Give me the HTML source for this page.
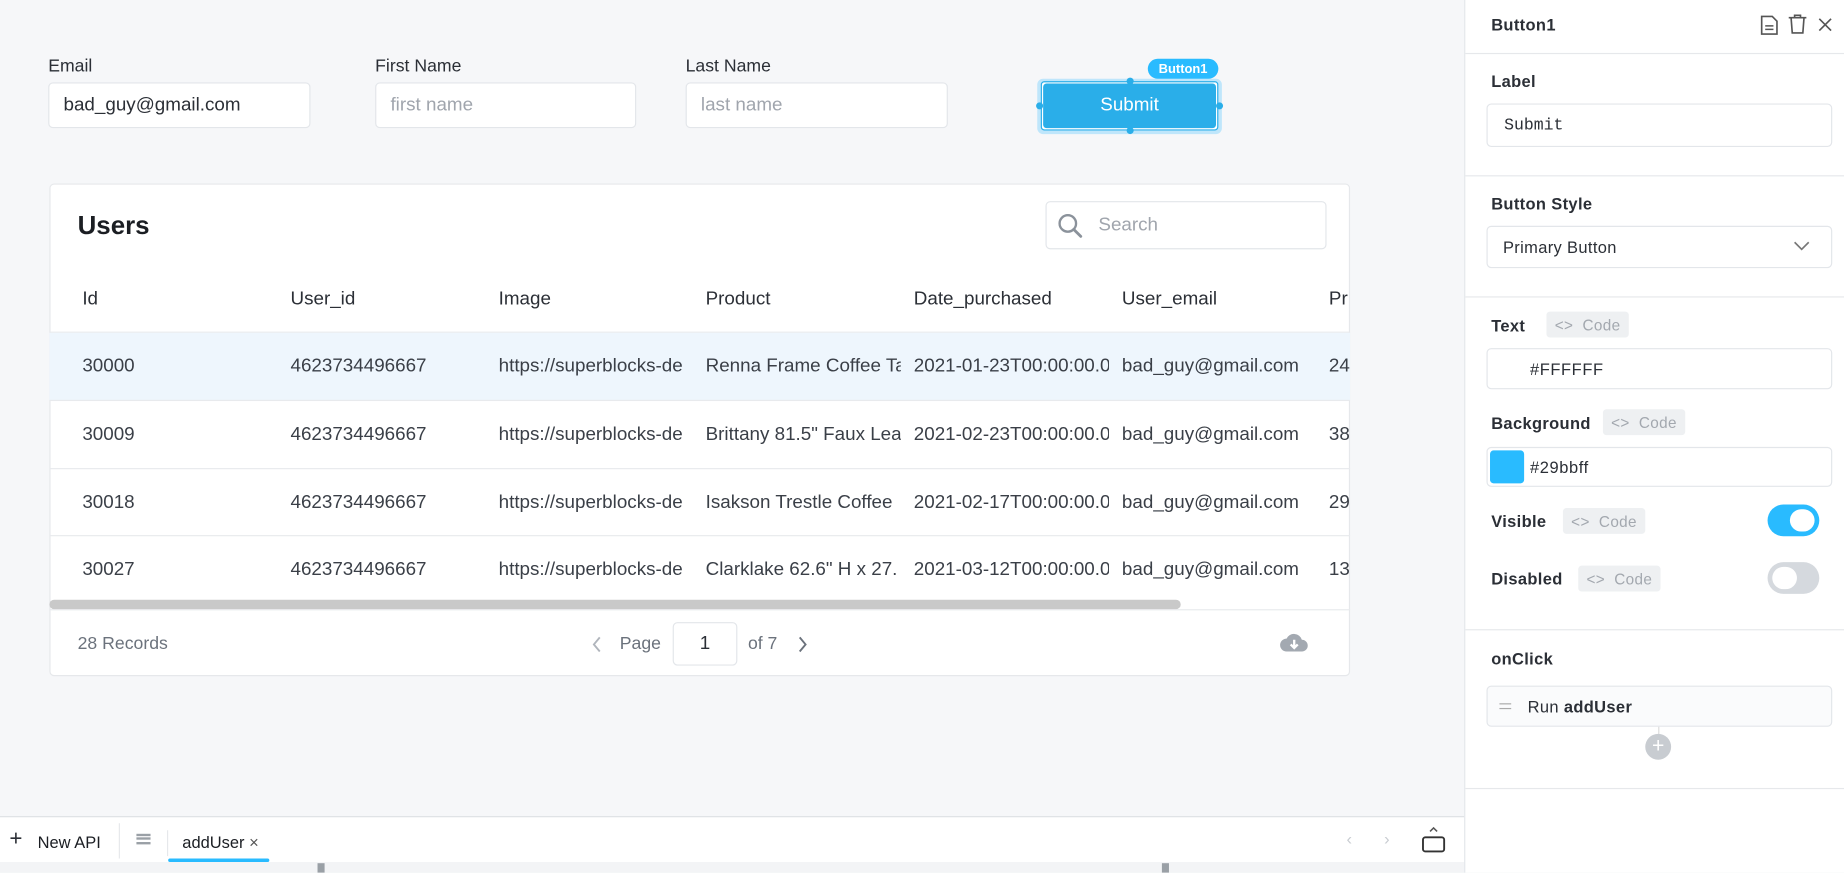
<!DOCTYPE html>
<html><head><meta charset="utf-8"><style>
*{box-sizing:border-box;margin:0;padding:0}
html,body{width:1844px;height:872px;overflow:hidden;background:#f6f7f9;font-family:"Liberation Sans",sans-serif}
#w{position:absolute;left:0;top:0;width:1568px;height:742px;transform:scale(1.17602);transform-origin:0 0;background:#f6f7f9;color:#2b2f36}
.a{position:absolute}
.lbl{font-size:15px;color:#2b2f36}
.inp{background:#fff;border:1px solid #e3e6ea;border-radius:4px;font-size:16px;padding:0 12px;display:flex;align-items:center}
.th{font-size:16px;color:#2b2f36}
.td{font-size:16px;color:#3a3f47;white-space:nowrap;overflow:hidden}
.row{position:absolute;left:42px;width:1106px;border-bottom:1px solid #e8eaed}
.pl{font-size:14px;font-weight:bold;color:#2b2f36;letter-spacing:.3px}
.chip{position:absolute;background:#eef0f2;border-radius:3px;color:#a3a8af;font-size:13px;height:22px;display:flex;align-items:center;padding:0 7px;letter-spacing:.3px}
.pin{position:absolute;left:1264px;width:294px;background:#fff;border:1px solid #e3e6ea;border-radius:4px;display:flex;align-items:center;font-size:14px;color:#2b2f36}
.div{position:absolute;left:1246px;width:322px;height:1px;background:#e6e8eb}
</style></head><body><div id="w">
<div class="a lbl" style="left:41px;top:48px">Email</div>
<div class="a lbl" style="left:319px;top:48px">First Name</div>
<div class="a lbl" style="left:583px;top:48px">Last Name</div>
<div class="a inp" style="left:41px;top:70px;width:223px;height:39px;color:#2b2f36">bad_guy@gmail.com</div>
<div class="a inp" style="left:319px;top:70px;width:222px;height:39px;color:#a0a5ad">first name</div>
<div class="a inp" style="left:583px;top:70px;width:223px;height:39px;color:#a0a5ad">last name</div>
<div class="a" style="left:882px;top:67px;width:157px;height:47px;background:#bfe6fb;border-radius:5px"></div>
<div class="a" style="left:885px;top:69px;width:151px;height:42px;border:1px solid #2aaee9;background:#fff;border-radius:3px"></div>
<div class="a" style="left:887px;top:71px;width:147px;height:38px;background:#2aaee9;border-radius:3px;color:#fff;font-size:16px;display:flex;align-items:center;justify-content:center">Submit</div>
<div class="a" style="left:958px;top:66px;width:6px;height:6px;border-radius:50%;background:#2aaee9"></div>
<div class="a" style="left:958px;top:108px;width:6px;height:6px;border-radius:50%;background:#2aaee9"></div>
<div class="a" style="left:881px;top:87px;width:6px;height:6px;border-radius:50%;background:#2aaee9"></div>
<div class="a" style="left:1034px;top:87px;width:6px;height:6px;border-radius:50%;background:#2aaee9"></div>
<div class="a" style="left:976px;top:50px;width:60px;height:17px;background:#29bbff;border-radius:9px;color:#fff;font-size:11px;font-weight:bold;display:flex;align-items:center;justify-content:center">Button1</div>

<div class="a" style="left:42px;top:156px;width:1106px;height:419px;background:#fff;border:1px solid #e6e8eb;border-radius:4px"></div>
<div class="a" style="left:66px;top:179px;font-size:22px;font-weight:bold;color:#1b1e23">Users</div>
<div class="a inp" style="left:889px;top:171px;width:239px;height:41px;color:#a0a5ad;padding-left:44px">Search</div>
<svg class="a" style="left:899px;top:181px" width="22" height="22" viewBox="0 0 22 22"><circle cx="9" cy="9" r="7" fill="none" stroke="#8b929b" stroke-width="2"/><path d="M14 14l6 6" stroke="#8b929b" stroke-width="2.4" stroke-linecap="round"/></svg>
<div class="row" style="top:226px;height:57px"></div>
<div class="a th" style="left:70px;top:246px">Id</div>
<div class="a th" style="left:247px;top:246px">User_id</div>
<div class="a th" style="left:424px;top:246px">Image</div>
<div class="a th" style="left:600px;top:246px">Product</div>
<div class="a th" style="left:777px;top:246px">Date_purchased</div>
<div class="a th" style="left:954px;top:246px">User_email</div>
<div class="a th" style="left:1130px;top:246px;width:18px;overflow:hidden">Pr</div>
<div class="row" style="top:283px;height:58px;background:#eef6fd"></div>
<div class="row" style="top:341px;height:58px"></div>
<div class="row" style="top:399px;height:57px"></div>
<div class="row" style="top:456px;height:63px"></div>
<div class="a" style="left:0;top:303px">
<div class="a td" style="left:70px;top:0">30000</div><div class="a td" style="left:247px;top:0">4623734496667</div><div class="a td" style="left:424px;top:0;width:166px">https://superblocks-de</div><div class="a td" style="left:600px;top:0;width:166px">Renna Frame Coffee Ta</div><div class="a td" style="left:777px;top:0;width:166px">2021-01-23T00:00:00.0</div><div class="a td" style="left:954px;top:0">bad_guy@gmail.com</div><div class="a td" style="left:1130px;top:0;width:18px">24</div>
</div>
<div class="a" style="left:0;top:361px">
<div class="a td" style="left:70px;top:0">30009</div><div class="a td" style="left:247px;top:0">4623734496667</div><div class="a td" style="left:424px;top:0;width:166px">https://superblocks-de</div><div class="a td" style="left:600px;top:0;width:166px">Brittany 81.5" Faux Lea</div><div class="a td" style="left:777px;top:0;width:166px">2021-02-23T00:00:00.0</div><div class="a td" style="left:954px;top:0">bad_guy@gmail.com</div><div class="a td" style="left:1130px;top:0;width:18px">38</div>
</div>
<div class="a" style="left:0;top:419px">
<div class="a td" style="left:70px;top:0">30018</div><div class="a td" style="left:247px;top:0">4623734496667</div><div class="a td" style="left:424px;top:0;width:166px">https://superblocks-de</div><div class="a td" style="left:600px;top:0;width:166px">Isakson Trestle Coffee</div><div class="a td" style="left:777px;top:0;width:166px">2021-02-17T00:00:00.0</div><div class="a td" style="left:954px;top:0">bad_guy@gmail.com</div><div class="a td" style="left:1130px;top:0;width:18px">29</div>
</div>
<div class="a" style="left:0;top:476px">
<div class="a td" style="left:70px;top:0">30027</div><div class="a td" style="left:247px;top:0">4623734496667</div><div class="a td" style="left:424px;top:0;width:166px">https://superblocks-de</div><div class="a td" style="left:600px;top:0;width:166px">Clarklake 62.6" H x 27.</div><div class="a td" style="left:777px;top:0;width:166px">2021-03-12T00:00:00.0</div><div class="a td" style="left:954px;top:0">bad_guy@gmail.com</div><div class="a td" style="left:1130px;top:0;width:18px">13</div>
</div>
<div class="a" style="left:42px;top:510px;width:962px;height:8px;background:#c9c9c9;border-radius:4px"></div>
<div class="a" style="left:66px;top:539px;font-size:15px;color:#6b727c">28 Records</div>
<svg class="a" style="left:503px;top:541px" width="10" height="14" viewBox="0 0 10 14"><path d="M7 1L2 7l5 6" fill="none" stroke="#b0b5bc" stroke-width="1.6"/></svg>
<div class="a" style="left:527px;top:539px;font-size:15px;color:#6b727c">Page</div>
<div class="a" style="left:572px;top:529px;width:55px;height:37px;border:1px solid #e3e6ea;border-radius:4px;background:#fff;font-size:16px;display:flex;align-items:center;justify-content:center">1</div>
<div class="a" style="left:636px;top:539px;font-size:15px;color:#6b727c">of 7</div>
<svg class="a" style="left:677px;top:541px" width="10" height="14" viewBox="0 0 10 14"><path d="M3 1l5 6-5 6" fill="none" stroke="#6b727c" stroke-width="1.6"/></svg>
<svg class="a" style="left:1088px;top:537px" width="25" height="20" viewBox="0 0 25 20"><path d="M6 17h13a5 5 0 0 0 0-10 7 7 0 0 0-13-1 5.5 5.5 0 0 0 0 11z" fill="#a3a9b1"/><path d="M12.5 7v7M9.5 11l3 3 3-3" stroke="#fff" stroke-width="2" fill="none"/></svg>

<div class="a" style="left:0;top:694px;width:1246px;height:1px;background:#dcdfe3"></div>
<div class="a" style="left:0;top:695px;width:1246px;height:38px;background:#fff"></div>
<div class="a" style="left:0;top:733px;width:1246px;height:9px;background:#f3f4f6"></div>
<div class="a" style="left:270px;top:734px;width:6px;height:8px;background:#9aa0a6"></div>
<div class="a" style="left:988px;top:734px;width:6px;height:8px;background:#9aa0a6"></div>
<div class="a" style="left:8px;top:703px;font-size:19px;color:#2b2f36">+</div>
<div class="a" style="left:32px;top:708px;font-size:14px;color:#1b1e23">New API</div>
<div class="a" style="left:101px;top:700px;width:1px;height:30px;background:#e6e8eb"></div>
<div class="a" style="left:116px;top:709px;width:12px;height:9px;border-top:2px solid #9aa0a6;border-bottom:2px solid #9aa0a6"></div>
<div class="a" style="left:116px;top:712px;width:12px;height:2px;background:#9aa0a6"></div>
<div class="a" style="left:142px;top:706px;width:1px;height:22px;background:#e6e8eb"></div>
<div class="a" style="left:155px;top:708px;font-size:14px;color:#1b1e23">addUser <span style="color:#555">×</span></div>
<div class="a" style="left:143px;top:730px;width:86px;height:3px;background:#29bbff;border-radius:2px"></div>
<div class="a" style="left:1145px;top:705px;font-size:14px;color:#c8ccd1">&#x2039;</div>
<div class="a" style="left:1177px;top:705px;font-size:14px;color:#c8ccd1">&#x203A;</div>
<svg class="a" style="left:1208px;top:702px" width="22" height="24" viewBox="0 0 22 24"><path d="M8 5l3-3 3 3" stroke="#555" fill="none" stroke-width="1.3"/><rect x="2" y="10" width="18" height="12" rx="2" fill="none" stroke="#333" stroke-width="1.6"/></svg>

<div class="a" style="left:1245px;top:0;width:323px;height:742px;background:#fff;border-left:1px solid #e3e6ea"></div>
<div class="a pl" style="left:1268px;top:13px;font-size:14px">Button1</div>
<svg class="a" style="left:1495px;top:12px" width="18" height="19" viewBox="0 0 18 19"><path d="M3 2h9l4 4v11H3z" fill="none" stroke="#555" stroke-width="1.4"/><path d="M6 10h7M6 13h7" stroke="#555" stroke-width="1.3"/></svg>
<svg class="a" style="left:1520px;top:11px" width="17" height="19" viewBox="0 0 17 19"><path d="M1 4h15M6 4V2h5v2M3 4l1 13h9l1-13" fill="none" stroke="#555" stroke-width="1.4"/></svg>
<svg class="a" style="left:1545px;top:14px" width="14" height="14" viewBox="0 0 14 14"><path d="M2 2l10 10M12 2L2 12" stroke="#555" stroke-width="1.4"/></svg>
<div class="div" style="top:45px"></div>
<div class="a pl" style="left:1268px;top:61px">Label</div>
<div class="pin" style="top:88px;height:37px;padding-left:14px;font-family:'Liberation Mono',monospace;font-size:14px">Submit</div>
<div class="div" style="top:149px"></div>
<div class="a pl" style="left:1268px;top:165px">Button Style</div>
<div class="pin" style="top:192px;height:36px;padding-left:13px;letter-spacing:.3px">Primary Button</div>
<svg class="a" style="left:1525px;top:205px" width="14" height="9" viewBox="0 0 14 9"><path d="M1 1l6 6 6-6" fill="none" stroke="#777" stroke-width="1.4"/></svg>
<div class="div" style="top:252px"></div>
<div class="a pl" style="left:1268px;top:269px">Text</div>
<div class="chip" style="left:1315px;top:265px">&lt;&gt;&nbsp; Code</div>
<div class="pin" style="top:296px;height:35px;padding-left:36px;letter-spacing:.5px">#FFFFFF</div>
<div class="a pl" style="left:1268px;top:352px">Background</div>
<div class="chip" style="left:1363px;top:348px">&lt;&gt;&nbsp; Code</div>
<div class="pin" style="top:380px;height:34px;padding-left:36px;letter-spacing:.5px">#29bbff</div>
<div class="a" style="left:1267px;top:383px;width:29px;height:28px;background:#29bbff;border-radius:3px"></div>
<div class="a pl" style="left:1268px;top:435px">Visible</div>
<div class="chip" style="left:1329px;top:432px">&lt;&gt;&nbsp; Code</div>
<div class="a" style="left:1503px;top:429px;width:44px;height:27px;border-radius:14px;background:#29bbff"></div>
<div class="a" style="left:1522px;top:433px;width:21px;height:19px;border-radius:10px;background:#fff"></div>
<div class="a pl" style="left:1268px;top:484px">Disabled</div>
<div class="chip" style="left:1342px;top:481px">&lt;&gt;&nbsp; Code</div>
<div class="a" style="left:1503px;top:478px;width:44px;height:27px;border-radius:14px;background:#d5d9de"></div>
<div class="a" style="left:1507px;top:482px;width:21px;height:19px;border-radius:10px;background:#fff"></div>
<div class="div" style="top:535px"></div>
<div class="a pl" style="left:1268px;top:552px">onClick</div>
<div class="pin" style="top:583px;height:35px;padding-left:34px;background:#fafbfc;letter-spacing:.3px">Run&nbsp;<b>addUser</b></div>
<div class="a" style="left:1275px;top:598px;width:10px;height:5px;border-top:1px solid #aaa;border-bottom:1px solid #aaa"></div>
<div class="a" style="left:1410px;top:618px;width:1px;height:8px;background:#ddd"></div>
<div class="a" style="left:1399px;top:624px;width:22px;height:22px;border-radius:50%;background:#c8ccd1;color:#fff;font-size:18px;line-height:21px;text-align:center">+</div>
<div class="div" style="top:670px"></div>
</div></body></html>
